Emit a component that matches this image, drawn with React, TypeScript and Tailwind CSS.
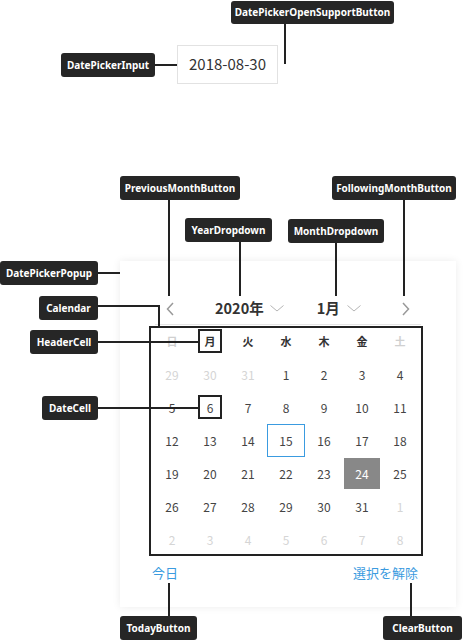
import React from "react";

type Box = { l: number; t: number; w: number; h: number };

const labels: (Box & { text: string })[] = [
  { text: "DatePickerOpenSupportButton", l: 231, t: 1, w: 163, h: 23 },
  { text: "DatePickerInput", l: 61, t: 53, w: 94, h: 24 },
  { text: "PreviousMonthButton", l: 120, t: 176, w: 120, h: 24 },
  { text: "FollowingMonthButton", l: 332, t: 176, w: 124, h: 24 },
  { text: "YearDropdown", l: 185, t: 218, w: 87, h: 24 },
  { text: "MonthDropdown", l: 288, t: 219, w: 96, h: 24 },
  { text: "DatePickerPopup", l: 0, t: 261, w: 98, h: 24 },
  { text: "Calendar", l: 39, t: 296, w: 59, h: 24 },
  { text: "HeaderCell", l: 30, t: 330, w: 68, h: 24 },
  { text: "DateCell", l: 42, t: 396, w: 56, h: 24 },
  { text: "TodayButton", l: 120, t: 616, w: 77, h: 24 },
  { text: "ClearButton", l: 383, t: 616, w: 79, h: 24 },
];

// leader lines from the labels to the parts
const lines: Box[] = [
  { l: 284, t: 24, w: 2, h: 40 },
  { l: 155, t: 64, w: 22, h: 2 },
  { l: 168, t: 200, w: 2, h: 96 },
  { l: 239, t: 242, w: 2, h: 54 },
  { l: 335, t: 243, w: 2, h: 53 },
  { l: 403, t: 200, w: 2, h: 96 },
  { l: 98, t: 272, w: 22, h: 2 },
  { l: 98, t: 305, w: 62, h: 2 },
  { l: 158, t: 305, w: 2, h: 21 },
  { l: 98, t: 341, w: 100, h: 2 },
  { l: 98, t: 407, w: 100, h: 2 },
  { l: 168, t: 583, w: 2, h: 33 },
  { l: 410, t: 583, w: 2, h: 33 },
];

const outlines: Box[] = [
  { l: 149, t: 326, w: 274, h: 230 },
  { l: 198, t: 329, w: 24, h: 24 },
  { l: 198, t: 395, w: 24, h: 24 },
];

const weekdays = ["日", "月", "火", "水", "木", "金", "土"];

type Day = { d: number; out?: boolean };

function buildDays(): Day[] {
  const days: Day[] = [];
  [29, 30, 31].forEach((d) => days.push({ d, out: true }));
  for (let d = 1; d <= 31; d++) days.push({ d });
  for (let d = 1; d <= 8; d++) days.push({ d, out: true });
  return days;
}

function ChevronLeft() {
  return (
    <svg width="8" height="14" viewBox="0 0 8 14" fill="none">
      <path d="M7 1L1.5 7L7 13" stroke="#999" strokeWidth="1.5" />
    </svg>
  );
}

function ChevronRight() {
  return (
    <svg width="8" height="14" viewBox="0 0 8 14" fill="none">
      <path d="M1 1L6.5 7L1 13" stroke="#999" strokeWidth="1.5" />
    </svg>
  );
}

function ChevronDown() {
  return (
    <svg width="14" height="7" viewBox="0 0 14 7" fill="none">
      <path d="M0.5 0.5L7 6L13.5 0.5" stroke="#b5b5b5" strokeWidth="1" />
    </svg>
  );
}

export default function App() {
  const days = buildDays();

  return (
    <div className="relative w-[464px] h-[640px] overflow-hidden bg-white font-['Noto_Sans_CJK_JP',sans-serif] text-[#333]">
      <div className="pt-[45px] pl-[177px]">
        <div className="flex h-[39px] w-[101px] items-center justify-center border border-[#e2e2e2] text-[15px]">
          2018-08-30
        </div>
      </div>

      <div className="mt-[177px] ml-[120px] flex h-[346px] w-[336px] flex-col bg-white pt-[33px] shadow-[0_0_8px_rgba(0,0,0,0.08)]">
        <div className="mx-[35px] flex h-[31px] items-center border-b border-[#e5e5e5] pl-[11px] pr-[11px] pb-[1px]">
          <ChevronLeft />
          <div className="ml-[41px] flex items-center">
            <span className="text-[14.5px] font-bold leading-none">2020年</span>
            <span className="ml-[6px]">
              <ChevronDown />
            </span>
            <span className="ml-[33px] text-[14.5px] font-bold leading-none">1月</span>
            <span className="ml-[7px]">
              <ChevronDown />
            </span>
          </div>
          <div className="ml-auto">
            <ChevronRight />
          </div>
        </div>

        <div className="ml-[33px] grid grid-cols-[repeat(7,38px)]">
          {weekdays.map((w, i) => (
            <div
              key={w}
              className={`flex h-[33px] items-center justify-center text-[11px] font-bold ${
                i === 0 || i === 6 ? "text-[#d0d0d0]" : "text-[#333]"
              }`}
            >
              {w}
            </div>
          ))}
          {days.map((day, i) => {
            const today = !day.out && day.d === 15;
            const selected = !day.out && day.d === 24;
            return (
              <div key={i} className="flex h-[33px] items-center justify-center">
                {selected ? (
                  <div className="flex h-[31px] w-[36px] items-center justify-center bg-[#888] text-[12px] text-white">
                    {day.d}
                  </div>
                ) : (
                  <div
                    className={`flex h-[33px] w-[38px] items-center justify-center text-[12px] ${
                      today ? "border border-[#3a9be0]" : ""
                    } ${day.out ? "text-[#d5d5d5]" : "text-[#444]"}`}
                  >
                    {day.d}
                  </div>
                )}
              </div>
            );
          })}
        </div>

        <div className="mt-[7px] flex items-center justify-between pl-[32px] pr-[38px] text-[13px] leading-[20px] text-[#3b9be0]">
          <span>今日</span>
          <span>選択を解除</span>
        </div>
      </div>

      {outlines.map((o, i) => (
        <div
          key={i}
          className="absolute border-2 border-[#222]"
          style={{ left: o.l, top: o.t, width: o.w, height: o.h }}
        />
      ))}

      {lines.map((o, i) => (
        <div
          key={i}
          className="absolute bg-[#222]"
          style={{ left: o.l, top: o.t, width: o.w, height: o.h }}
        />
      ))}

      {labels.map((o) => (
        <div
          key={o.text}
          className="absolute flex items-center justify-center rounded-[3px] bg-[#262626] font-['Noto_Sans',sans-serif] text-[10px] font-bold text-white"
          style={{ left: o.l, top: o.t, width: o.w, height: o.h }}
        >
          {o.text}
        </div>
      ))}
    </div>
  );
}
